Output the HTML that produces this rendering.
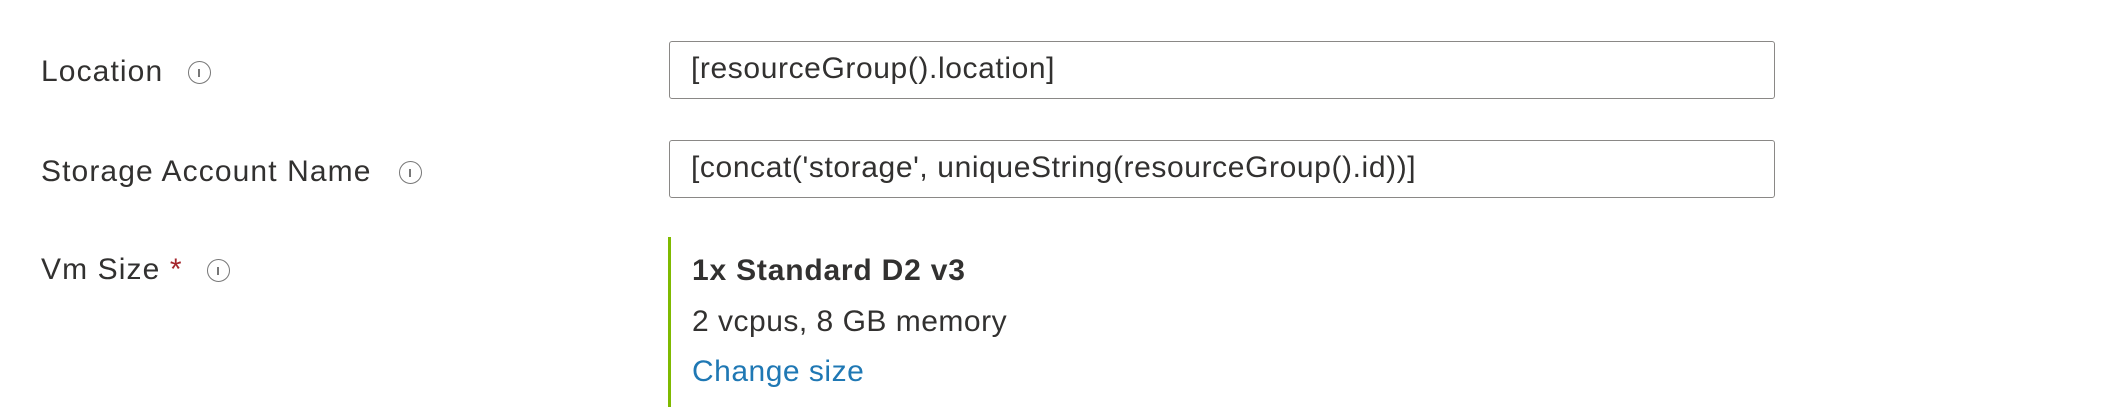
<!DOCTYPE html>
<html><head><style>
html,body{margin:0;padding:0;background:#fff;width:2120px;height:415px;overflow:hidden;position:relative;font-family:"Liberation Sans",sans-serif;color:#323130}
.l{position:absolute;left:41px;font-size:30px;letter-spacing:1.1px;line-height:36px}
.i{position:absolute;width:23px;height:23px;border:1.5px solid #777;border-radius:50%;box-sizing:border-box}
.i:after{content:"";position:absolute;left:9px;top:7px;width:1.5px;height:8px;background:#777}
.in{position:absolute;left:669px;width:1106px;height:58px;border:1.5px solid #8a8886;border-radius:3px;box-sizing:border-box;font-size:30px;line-height:54px;padding-left:21px;letter-spacing:0.6px}
.t{position:absolute;left:692px;font-size:30px;line-height:36px;letter-spacing:0.5px}
</style></head><body>
<div class="l" style="top:54px">Location</div><div class="i" style="left:188px;top:61px"></div>
<div class="l" style="top:154px">Storage Account Name</div><div class="i" style="left:399px;top:161px"></div>
<div class="l" style="top:252px">Vm Size <span style="color:#a4262c">*</span></div><div class="i" style="left:207px;top:259px"></div>
<div class="in" style="top:41px">[resourceGroup().location]</div>
<div class="in" style="top:140px">[concat('storage', uniqueString(resourceGroup().id))]</div>
<div style="position:absolute;left:668px;top:237px;width:3px;height:170px;background:#7fba00"></div>
<div class="t" style="top:253px;font-weight:bold;letter-spacing:0.8px">1x Standard D2 v3</div>
<div class="t" style="top:304px">2 vcpus, 8 GB memory</div>
<div class="t" style="top:354px;color:#1f78b4">Change size</div>
</body></html>
